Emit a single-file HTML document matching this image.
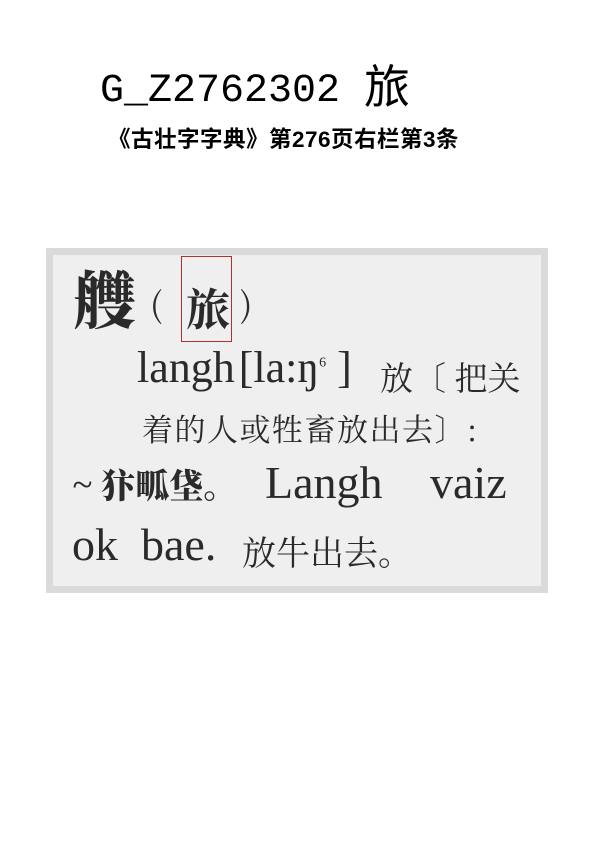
<!DOCTYPE html>
<html><head><meta charset="utf-8"><style>
body{margin:0;width:595px;height:842px;background:#fff;position:relative;overflow:hidden}
.a{position:absolute;white-space:nowrap;line-height:1}
.m{font-family:"Liberation Mono",monospace}
.s{font-family:"Liberation Serif","Noto Serif CJK SC",serif;color:#2a2a2a}
.c{font-family:"Noto Serif CJK SC",serif;color:#2a2a2a}
.k{font-family:"Liberation Sans","Noto Sans CJK SC",sans-serif}
</style></head><body>
<div class="a m" style="left:100px;top:62px;font-size:40px">G_Z2762302 <span class="k" style="font-size:46px;position:relative;top:2px">旅</span></div>
<div class="a k" style="left:108px;top:129px;font-size:22.5px;font-weight:bold;letter-spacing:0.5px">《古壮字字典》第276页右栏第3条</div>
<div class="a" style="left:46px;top:248px;width:502px;height:345px;background:#dadada"></div>
<div class="a" style="left:53px;top:255px;width:488px;height:331px;background:#efefef"></div>
<div class="a c" style="left:74px;top:266px;font-size:62px;font-weight:900">艭</div>
<div class="a c" style="left:150px;top:286px;font-size:34px">(</div>
<div class="a c" style="left:186px;top:284px;font-size:44px;font-weight:bold">旅</div>
<div class="a" style="left:181px;top:256px;width:49px;height:84px;border:1px solid #b03030"></div>
<div class="a c" style="left:240px;top:286px;font-size:34px">)</div>
<div class="a s" style="left:137px;top:346px;font-size:44px">langh<span style="margin-left:4px">[la:ŋ<sup style="font-size:14px">6</sup> ]</span></div>
<div class="a c" style="left:380px;top:360px;font-size:33px">放〔 把关</div>
<div class="a c" style="left:142px;top:412px;font-size:31px;letter-spacing:1.5px">着的人或牲畜放出去〕:</div>
<div class="a c" style="left:72px;top:467px;font-size:34px;font-weight:900">~ 犿<span>畖</span>垡。</div>
<div class="a s" style="left:265px;top:460px;font-size:46px">Langh</div>
<div class="a s" style="left:430px;top:460px;font-size:46px">vaiz</div>
<div class="a s" style="left:72px;top:522px;font-size:46px">ok&nbsp; bae.</div>
<div class="a c" style="left:242px;top:534px;font-size:34px">放牛出去。</div>
</body></html>
